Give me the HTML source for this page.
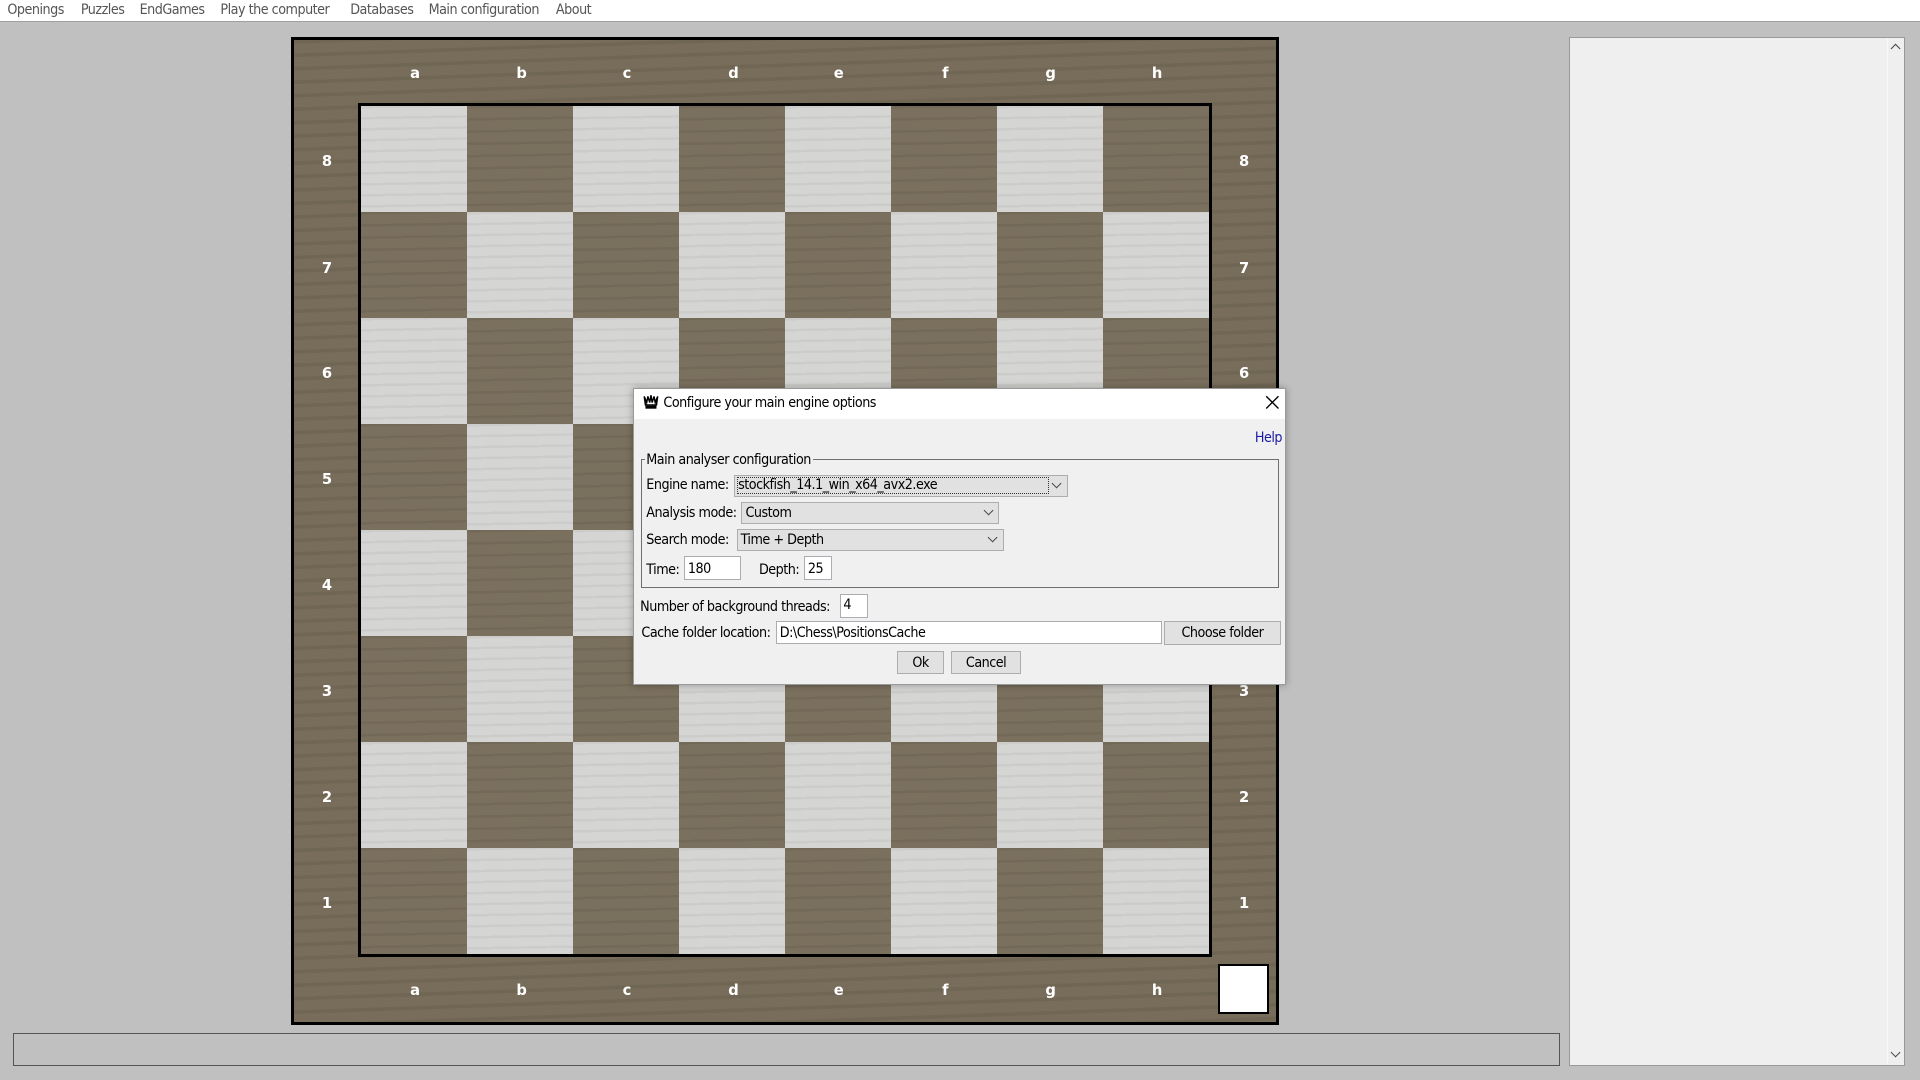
<!DOCTYPE html>
<html><head><meta charset="utf-8">
<style>
html,body{margin:0;padding:0;width:1920px;height:1080px;overflow:hidden;background:#c0c0c0}
#w{position:absolute;left:0;top:0;width:1568px;height:882px;zoom:1.2244898;font-family:"Liberation Sans","DejaVu Sans",sans-serif;}
.a{position:absolute}
#menu{left:0;top:0;width:1568px;height:17px;background:#fff;border-bottom:1px solid #a0a0a0}
#menu span{position:absolute;top:2px;font-size:11.6px;color:#555;font-family:"DejaVu Sans Condensed","Liberation Sans",sans-serif;letter-spacing:-0.4px}
#board{left:238px;top:30px;width:802px;height:802px;border:3px solid #000;background:#756a57;
 background-image:repeating-linear-gradient(178deg,rgba(0,0,0,.04) 0 3px,rgba(255,255,255,.02) 3px 11px)}
#inner{left:292px;top:84px;width:693px;height:693px;border:3px solid #000}
.sq{position:absolute;width:86.625px;height:86.625px}
.l{background:#d3d3d2;background-image:repeating-linear-gradient(179deg,rgba(0,0,0,.035) 0 2px,rgba(255,255,255,.04) 2px 9px)}
.d{background:#786d5b;background-image:repeating-linear-gradient(179deg,rgba(0,0,0,.04) 0 2px,rgba(255,255,255,.02) 2px 10px)}
.lab{position:absolute;color:#fff;font-weight:bold;font-size:12px;font-family:"DejaVu Sans","Liberation Sans",sans-serif;width:20px;text-align:center;margin-left:-10px;margin-top:-6px}
#dlg{left:517px;top:317px;width:532px;height:241px;background:#f0f0f0;border:1px solid #9a9a9a;font-size:12px;color:#000;box-shadow:0 0 6px rgba(0,0,0,.3)}
#title{left:0;top:0;width:532px;height:24px;background:#fff}
.t{position:absolute;white-space:nowrap;font-size:11.6px;font-family:"DejaVu Sans Condensed","Liberation Sans",sans-serif;letter-spacing:-0.4px}
.cb{position:absolute;background:#e1e1e1;border:1px solid #adadad;box-sizing:border-box}
.tf{position:absolute;background:#fff;border:1px solid #abadb3;box-sizing:border-box}
.bt{position:absolute;background:#e1e1e1;border:1px solid #adadad;box-sizing:border-box;text-align:center;line-height:16px;font-size:11.6px;letter-spacing:-0.4px;font-family:"DejaVu Sans Condensed","Liberation Sans",sans-serif}
.chev{position:absolute;width:5px;height:5px;border-right:1px solid #444;border-bottom:1px solid #444;transform:rotate(45deg)}
</style></head><body>
<div id="w">
<div id="menu" class="a">
<span style="left:6px">Openings</span><span style="left:66px">Puzzles</span><span style="left:114px">EndGames</span><span style="left:180px">Play the computer</span><span style="left:286px">Databases</span><span style="left:350px">Main configuration</span><span style="left:454px">About</span>
</div>
<div id="board" class="a"></div>
<div id="inner" class="a">
<div class="sq l" style="left:0;top:0"></div><div class="sq d" style="left:86.6px;top:0"></div><div class="sq l" style="left:173.2px;top:0"></div><div class="sq d" style="left:259.9px;top:0"></div><div class="sq l" style="left:346.5px;top:0"></div><div class="sq d" style="left:433.1px;top:0"></div><div class="sq l" style="left:519.7px;top:0"></div><div class="sq d" style="left:606.4px;top:0"></div>
<div class="sq d" style="left:0;top:86.6px"></div><div class="sq l" style="left:86.6px;top:86.6px"></div><div class="sq d" style="left:173.2px;top:86.6px"></div><div class="sq l" style="left:259.9px;top:86.6px"></div><div class="sq d" style="left:346.5px;top:86.6px"></div><div class="sq l" style="left:433.1px;top:86.6px"></div><div class="sq d" style="left:519.7px;top:86.6px"></div><div class="sq l" style="left:606.4px;top:86.6px"></div>
<div class="sq l" style="left:0;top:173.2px"></div><div class="sq d" style="left:86.6px;top:173.2px"></div><div class="sq l" style="left:173.2px;top:173.2px"></div><div class="sq d" style="left:259.9px;top:173.2px"></div><div class="sq l" style="left:346.5px;top:173.2px"></div><div class="sq d" style="left:433.1px;top:173.2px"></div><div class="sq l" style="left:519.7px;top:173.2px"></div><div class="sq d" style="left:606.4px;top:173.2px"></div>
<div class="sq d" style="left:0;top:259.9px"></div><div class="sq l" style="left:86.6px;top:259.9px"></div><div class="sq d" style="left:173.2px;top:259.9px"></div><div class="sq l" style="left:259.9px;top:259.9px"></div><div class="sq d" style="left:346.5px;top:259.9px"></div><div class="sq l" style="left:433.1px;top:259.9px"></div><div class="sq d" style="left:519.7px;top:259.9px"></div><div class="sq l" style="left:606.4px;top:259.9px"></div>
<div class="sq l" style="left:0;top:346.5px"></div><div class="sq d" style="left:86.6px;top:346.5px"></div><div class="sq l" style="left:173.2px;top:346.5px"></div><div class="sq d" style="left:259.9px;top:346.5px"></div><div class="sq l" style="left:346.5px;top:346.5px"></div><div class="sq d" style="left:433.1px;top:346.5px"></div><div class="sq l" style="left:519.7px;top:346.5px"></div><div class="sq d" style="left:606.4px;top:346.5px"></div>
<div class="sq d" style="left:0;top:433.1px"></div><div class="sq l" style="left:86.6px;top:433.1px"></div><div class="sq d" style="left:173.2px;top:433.1px"></div><div class="sq l" style="left:259.9px;top:433.1px"></div><div class="sq d" style="left:346.5px;top:433.1px"></div><div class="sq l" style="left:433.1px;top:433.1px"></div><div class="sq d" style="left:519.7px;top:433.1px"></div><div class="sq l" style="left:606.4px;top:433.1px"></div>
<div class="sq l" style="left:0;top:519.7px"></div><div class="sq d" style="left:86.6px;top:519.7px"></div><div class="sq l" style="left:173.2px;top:519.7px"></div><div class="sq d" style="left:259.9px;top:519.7px"></div><div class="sq l" style="left:346.5px;top:519.7px"></div><div class="sq d" style="left:433.1px;top:519.7px"></div><div class="sq l" style="left:519.7px;top:519.7px"></div><div class="sq d" style="left:606.4px;top:519.7px"></div>
<div class="sq d" style="left:0;top:606.4px"></div><div class="sq l" style="left:86.6px;top:606.4px"></div><div class="sq d" style="left:173.2px;top:606.4px"></div><div class="sq l" style="left:259.9px;top:606.4px"></div><div class="sq d" style="left:346.5px;top:606.4px"></div><div class="sq l" style="left:433.1px;top:606.4px"></div><div class="sq d" style="left:519.7px;top:606.4px"></div><div class="sq l" style="left:606.4px;top:606.4px"></div>
</div>
<!-- labels -->
<div class="lab" style="left:339px;top:59px">a</div><div class="lab" style="left:426px;top:59px">b</div><div class="lab" style="left:512px;top:59px">c</div><div class="lab" style="left:599px;top:59px">d</div><div class="lab" style="left:685px;top:59px">e</div><div class="lab" style="left:772px;top:59px">f</div><div class="lab" style="left:858px;top:59px">g</div><div class="lab" style="left:945px;top:59px">h</div>
<div class="lab" style="left:339px;top:808px">a</div><div class="lab" style="left:426px;top:808px">b</div><div class="lab" style="left:512px;top:808px">c</div><div class="lab" style="left:599px;top:808px">d</div><div class="lab" style="left:685px;top:808px">e</div><div class="lab" style="left:772px;top:808px">f</div><div class="lab" style="left:858px;top:808px">g</div><div class="lab" style="left:945px;top:808px">h</div>
<div class="lab" style="left:267px;top:131px">8</div><div class="lab" style="left:267px;top:218px">7</div><div class="lab" style="left:267px;top:304px">6</div><div class="lab" style="left:267px;top:391px">5</div><div class="lab" style="left:267px;top:477px">4</div><div class="lab" style="left:267px;top:564px">3</div><div class="lab" style="left:267px;top:650px">2</div><div class="lab" style="left:267px;top:737px">1</div>
<div class="lab" style="left:1016px;top:131px">8</div><div class="lab" style="left:1016px;top:218px">7</div><div class="lab" style="left:1016px;top:304px">6</div><div class="lab" style="left:1016px;top:391px">5</div><div class="lab" style="left:1016px;top:477px">4</div><div class="lab" style="left:1016px;top:564px">3</div><div class="lab" style="left:1016px;top:650px">2</div><div class="lab" style="left:1016px;top:737px">1</div>
<div class="a" style="left:995px;top:787px;width:38px;height:38px;background:#fff;border:2px solid #000"></div>
<!-- status bar -->
<div class="a" style="left:11px;top:844px;width:1261px;height:25px;border:1px solid #555"></div>
<!-- right panel -->
<div class="a" style="left:1281px;top:30px;width:273px;height:839px;background:#efefef;border:1px solid #999"></div>
<div class="a" style="left:1541px;top:31px;width:1px;height:838px;background:#f8f8f8"></div>
<div class="chev" style="left:1545px;top:37px;transform:rotate(225deg)"></div>
<div class="chev" style="left:1545px;top:857px"></div>
<!-- dialog -->
<div id="dlg" class="a">
 <div id="title" class="a"></div>
 <svg class="a" style="left:7px;top:4px" width="13" height="13" viewBox="0 0 13 13"><path d="M1 2 L3 7 L4 2 L5.5 7 L6.5 1 L7.5 7 L9 2 L10 7 L12 2 L11 9 H2 Z" fill="none" stroke="#000" stroke-width="1.2"/><rect x="2" y="9.5" width="9" height="2.5" fill="#000"/></svg>
 <div class="t" style="left:24px;top:5px">Configure your main engine options</div>
 <svg class="a" style="left:515px;top:5px" width="12" height="12"><path d="M1 1L11 11M11 1L1 11" stroke="#000" stroke-width="1.1"/></svg>
 <div class="t" style="left:507px;top:33px;color:#1a1aa6">Help</div>
 <div class="a" style="left:6px;top:57px;width:519px;height:104px;border:1px solid #6e6e6e"></div>
 <div class="t" style="left:9px;top:51px;background:#f0f0f0;padding:0 2px 0 1px">Main analyser configuration</div>
 <div class="t" style="left:10px;top:72px">Engine name:</div>
 <div class="cb" style="left:82px;top:70px;width:272px;height:18px"></div>
 <div class="a" style="left:84px;top:72px;width:253px;height:12px;border:1px dotted #333"></div>
 <div class="t" style="left:85px;top:72px">stockfish_14.1_win_x64_avx2.exe</div>
 <div class="chev" style="left:342px;top:74px"></div>
 <div class="t" style="left:10px;top:95px">Analysis mode:</div>
 <div class="cb" style="left:87px;top:92px;width:211px;height:18px"></div>
 <div class="t" style="left:91px;top:95px">Custom</div>
 <div class="chev" style="left:287px;top:96px"></div>
 <div class="t" style="left:10px;top:117px">Search mode:</div>
 <div class="cb" style="left:84px;top:114px;width:218px;height:18px"></div>
 <div class="t" style="left:87px;top:117px">Time + Depth</div>
 <div class="chev" style="left:290px;top:118px"></div>
 <div class="t" style="left:10px;top:141px">Time:</div>
 <div class="tf" style="left:41px;top:136px;width:46px;height:20px"></div>
 <div class="t" style="left:44px;top:140px">180</div>
 <div class="t" style="left:102px;top:141px">Depth:</div>
 <div class="tf" style="left:139px;top:136px;width:23px;height:20px"></div>
 <div class="t" style="left:142px;top:140px">25</div>
 <div class="t" style="left:5px;top:171px">Number of background threads:</div>
 <div class="tf" style="left:168px;top:167px;width:23px;height:20px"></div>
 <div class="t" style="left:171px;top:170px">4</div>
 <div class="t" style="left:6px;top:193px">Cache folder location:</div>
 <div class="tf" style="left:116px;top:189px;width:315px;height:19px"></div>
 <div class="t" style="left:119px;top:193px">D:\Chess\PositionsCache</div>
 <div class="bt" style="left:433px;top:189px;width:95px;height:20px;line-height:19px">Choose folder</div>
 <div class="bt" style="left:215px;top:214px;width:38px;height:19px;line-height:18px">Ok</div>
 <div class="bt" style="left:259px;top:214px;width:57px;height:19px;line-height:18px">Cancel</div>
</div>
</div>
</body></html>
